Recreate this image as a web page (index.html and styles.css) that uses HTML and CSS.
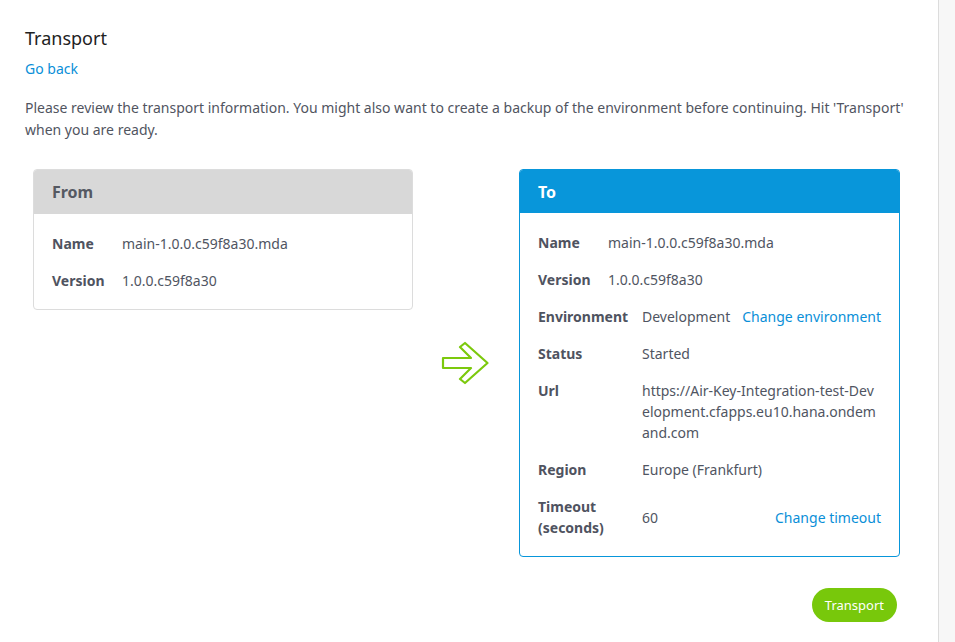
FILE: index.html
```html
<!DOCTYPE html>
<html>
<head>
<meta charset="utf-8">
<link rel="stylesheet" href="styles.css">
</head>
<body>
<div class="page">
  <main class="main">
    <h1 class="title">Transport</h1>
    <a class="link back">Go back</a>
    <p class="intro">Please review the transport information. You might also want to create a backup of the environment before continuing. Hit 'Transport' when you are ready.</p>
    <div class="cards">
      <section class="card card-from">
        <div class="card-head">From</div>
        <div class="card-body">
          <div class="grid2">
            <div class="lbl">Name</div><div class="val">main-1.0.0.c59f8a30.mda</div>
            <div class="lbl">Version</div><div class="val">1.0.0.c59f8a30</div>
          </div>
        </div>
      </section>
      <div class="arrow-col">
        <svg class="arrow" width="48" height="44" viewBox="0 0 48 44">
          <polygon points="2,17 30,17 19,6 24,2 46.5,22 24,42 19,38 30,27 2,27" fill="none" stroke="#7cc90d" stroke-width="2.2" stroke-linejoin="round"/>
        </svg>
      </div>
      <section class="card card-to">
        <div class="card-head">To</div>
        <div class="card-body">
          <div class="grid2">
            <div class="lbl">Name</div><div class="val">main-1.0.0.c59f8a30.mda</div>
            <div class="lbl">Version</div><div class="val">1.0.0.c59f8a30</div>
          </div>
          <div class="grid3">
            <div class="lbl">Environment</div><div class="val">Development</div><a class="link act">Change environment</a>
            <div class="lbl">Status</div><div class="val span">Started</div>
            <div class="lbl">Url</div><div class="val span url">https://Air-Key-Integration-test-Dev<wbr>elopment.cfapps.eu10.hana.ondem<wbr>and.com</div>
            <div class="lbl">Region</div><div class="val span">Europe (Frankfurt)</div>
            <div class="lbl">Timeout (seconds)</div><div class="val mid">60</div><a class="link act mid">Change timeout</a>
          </div>
        </div>
      </section>
    </div>
    <div class="actions">
      <button class="btn">Transport</button>
    </div>
  </main>
  <div class="scrollbar"></div>
</div>
</body>
</html>
```

FILE: styles.css
```css
* { box-sizing: border-box; }
html, body { margin: 0; padding: 0; background: #fff; }
body {
  font-family: "Noto Sans", "Open Sans", sans-serif;
  font-size: 14px;
  color: #505562;
}
.page {
  display: flex;
  height: 642px;
}
.main {
  flex: 1;
  padding: 26px 25px 0 25px;
  min-width: 0;
}
.scrollbar {
  width: 17px;
  border-left: 1px solid #dcdcdc;
  background: #f7f7f7;
}
.title {
  margin: 0;
  font-size: 18px;
  line-height: 24px;
  font-weight: 400;
  color: #222;
}
.link {
  color: #0a8fd8;
  text-decoration: none;
  cursor: pointer;
}
.back {
  display: block;
  margin-top: 9px;
  line-height: 20px;
}
.intro {
  margin: 18px 0 0 0;
  line-height: 22px;
  color: #51555f;
}
.cards {
  display: grid;
  grid-template-columns: 380px 106px 381px;
  margin: 28px 0 0 8px;
  align-items: start;
}
.card {
  border: 1px solid #dcdcdc;
  border-radius: 4px;
  overflow: hidden;
}
.card-head {
  height: 44px;
  padding: 0 18px;
  display: flex;
  align-items: center;
  font-size: 16px;
  font-weight: 700;
  background: #d8d8d8;
  color: #555962;
}
.card-to { border-color: #0896da; }
.card-to .card-head {
  background: #0896da;
  color: #fff;
  height: 43px;
}
.card-body {
  padding: 11px 18px 10px 18px;
}
.grid2 {
  display: grid;
  grid-template-columns: 54px minmax(0, 1fr);
  column-gap: 16px;
}
.grid3 {
  display: grid;
  grid-template-columns: 88px minmax(0, 1fr) auto;
  column-gap: 16px;
}
.lbl {
  font-weight: 700;
  padding: 8px 0;
  line-height: 21px;
  color: #4f5360;
  white-space: nowrap;
}
.grid3 .lbl:nth-last-child(3) { white-space: normal; }
.val {
  padding: 8px 0;
  line-height: 21px;
  white-space: nowrap;
}
.span { grid-column: 2 / 4; }
.url {
  white-space: normal;
  overflow-wrap: anywhere;
}
.act {
  padding: 8px 0;
  line-height: 21px;
  text-align: right;
  white-space: nowrap;
}
.mid { align-self: center; }
.arrow-col {
  align-self: stretch;
  display: flex;
  align-items: center;
  justify-content: center;
}
.arrow { display: block; margin-right: 2px; }
.actions {
  display: flex;
  justify-content: flex-end;
  width: 875px;
  margin-top: 31px;
}
.btn {
  font-family: "Noto Sans", "Open Sans", sans-serif;
  font-size: 13px;
  color: #fff;
  background: #78c80b;
  border: none;
  border-radius: 17px;
  height: 34px;
  padding: 0 13px;
  margin-right: 3px;
}
```
